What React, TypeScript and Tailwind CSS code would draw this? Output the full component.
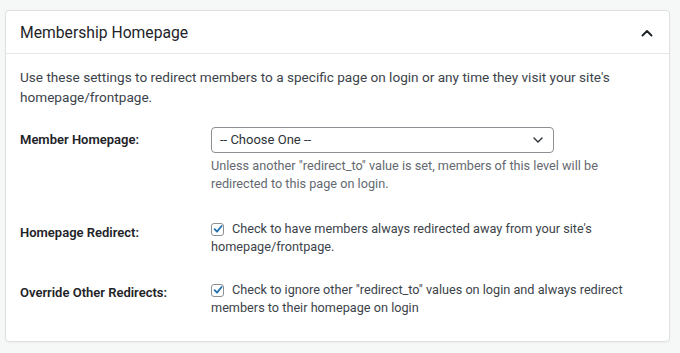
import { useState } from "react";

function Check({ checked }: { checked: boolean }) {
  return (
    <span className="inline-flex h-[13px] w-[13px] shrink-0 items-center justify-center rounded-[3px] border border-[#8c8f94] bg-white">
      {checked && (
        <svg width="10" height="10" viewBox="0 0 10 10" fill="none">
          <path d="M1.6 5.2 L4 7.6 L8.6 2" stroke="#2271b1" strokeWidth="1.8" strokeLinecap="round" strokeLinejoin="round" />
        </svg>
      )}
    </span>
  );
}

function App() {
  const [open] = useState(true);

  return (
    <div className="min-h-screen bg-[#f6f7f7] pl-[5px] pt-[10px] font-['Roboto',_'Liberation_Sans',_sans-serif] text-[12.7px] text-[#3c434a]">
      <div className="w-[665px] h-[332px] rounded-[4px] border border-[#e0e0e3] bg-white shadow-[0_1px_2px_rgba(0,0,0,0.04)]">
        {/* header */}
        <div className="flex h-[43px] items-center justify-between border-b border-[#e6e6e8] pl-[14px] pr-[16px] pt-[2px]">
          <h2 className="text-[15.7px] font-normal text-[#1d2327]">Membership Homepage</h2>
          {open && (
            <svg width="12" height="8" viewBox="0 0 12 8" fill="none">
              <path d="M1.5 6.5 L6 2 L10.5 6.5" stroke="#1d2327" strokeWidth="1.9" strokeLinecap="round" strokeLinejoin="round" />
            </svg>
          )}
        </div>

        <div className="px-[14px] pt-[13px]">
          <p className="text-[13.6px] leading-[20px]">
            Use these settings to redirect members to a specific page on login or any time they visit your site's
            <br />
            homepage/frontpage.
          </p>

          {/* Member Homepage */}
          <div className="mt-[20px] flex">
            <div className="w-[191px] shrink-0 pt-[3px] text-[13px] leading-[20px] font-semibold text-[#1d2327]">Member Homepage:</div>
            <div className="flex-1">
              <div className="flex h-[26px] w-[343px] items-center justify-between rounded-[4px] border border-[#8c8f94] bg-white pl-[8px] pr-[10px] text-[13px] text-[#2c3338]">
                <span>-- Choose One --</span>
                <svg width="10" height="6" viewBox="0 0 10 6" fill="none">
                  <path d="M1 1 L5 5 L9 1" stroke="#2c3338" strokeWidth="1.4" strokeLinecap="round" strokeLinejoin="round" />
                </svg>
              </div>
              <p className="mt-[4px] leading-[18px] text-[#646970] whitespace-nowrap">
                Unless another "redirect_to" value is set, members of this level will be
                <br />
                redirected to this page on login.
              </p>
            </div>
          </div>

          {/* Homepage Redirect */}
          <div className="mt-[27px] flex">
            <div className="w-[191px] shrink-0 pt-[3px] text-[13px] leading-[20px] font-semibold text-[#1d2327]">Homepage Redirect:</div>
            <div className="flex-1 leading-[18px] whitespace-nowrap">
              <div className="flex items-center gap-[8px]">
                <Check checked />
                <span>Check to have members always redirected away from your site's</span>
              </div>
              <div>homepage/frontpage.</div>
            </div>
          </div>

          {/* Override Other Redirects */}
          <div className="mt-[25px] flex">
            <div className="w-[191px] shrink-0 pt-[2px] text-[13px] leading-[20px] font-semibold text-[#1d2327]">Override Other Redirects:</div>
            <div className="flex-1 leading-[18px] whitespace-nowrap">
              <div className="flex items-center gap-[8px]">
                <Check checked />
                <span>Check to ignore other "redirect_to" values on login and always redirect</span>
              </div>
              <div>members to their homepage on login</div>
            </div>
          </div>
        </div>
      </div>
    </div>
  );
}

export default App;
